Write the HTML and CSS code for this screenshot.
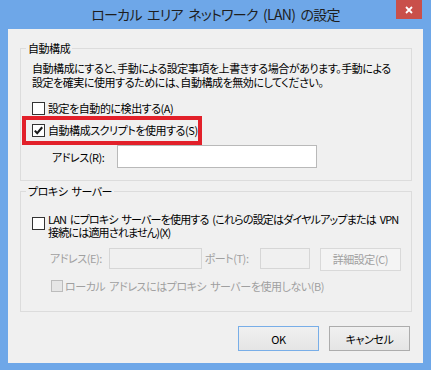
FILE: index.html
```html
<!DOCTYPE html>
<html lang="ja">
<head>
  <meta charset="UTF-8">
  <title>ローカル エリア ネットワーク (LAN) の設定</title>
  <link rel="stylesheet" href="styles.css">
</head>
<body>
  <div class="window">
    <!-- Title bar -->
    <div class="titlebar">
      <div class="title">ローカル エリア ネットワーク (LAN) の設定</div>
      <div class="close">
        <svg width="8" height="8" viewBox="0 0 8 8"><path d="M1 1 L7 7 M7 1 L1 7" stroke="#fff" stroke-width="1.8" fill="none"/></svg>
      </div>
    </div>

    <div class="client">
      <!-- Automatic configuration -->
      <fieldset class="group auto-group">
        <legend>自動構成</legend>
        <p class="note">自動構成にすると、手動による設定事項を上書きする場合があります。手動による<br>設定を確実に使用するためには、自動構成を無効にしてください。</p>

        <div class="check-row first">
          <span class="box"></span>
          <span>設定を自動的に検出する(A)</span>
        </div>

        <div class="check-row highlighted">
          <span class="box">
            <svg width="11" height="11" viewBox="0 0 11 11"><path d="M1.8 5.6 L4.2 8.2 L9.2 2.3" stroke="#1a1a1a" stroke-width="2.1" fill="none"/></svg>
          </span>
          <span>自動構成スクリプトを使用する(S)</span>
        </div>

        <div class="field-row">
          <label class="field-label">アドレス(R):</label>
          <span class="input script-input"></span>
        </div>
      </fieldset>

      <!-- Proxy server -->
      <fieldset class="group proxy-group">
        <legend>プロキシ サーバー</legend>
        <div class="proxy-check">
          <span class="box"></span>
          <span>LAN にプロキシ サーバーを使用する (これらの設定はダイヤルアップまたは VPN<br>接続には適用されません)(X)</span>
        </div>

        <div class="proxy-row">
          <span class="dim addr-label">アドレス(E):</span>
          <span class="input disabled addr-input"></span>
          <span class="dim port-label">ポート(T):</span>
          <span class="input disabled port-input"></span>
          <span class="btn disabled-btn">詳細設定(C)</span>
        </div>

        <div class="check-row bypass">
          <span class="box off"></span>
          <span class="dim">ローカル アドレスにはプロキシ サーバーを使用しない(B)</span>
        </div>
      </fieldset>

      <div class="actions">
        <span class="btn default">OK</span>
        <span class="btn">キャンセル</span>
      </div>
    </div>
  </div>
</body>
</html>
```

FILE: styles.css
```css
body {
  margin: 0;
  background-color: #6ea7e8;
  font-family: "Noto Sans CJK JP", "Noto Sans", sans-serif;
  font-size: 11px;
  font-feature-settings: "palt";
  letter-spacing: -0.45px;
  word-spacing: 2px;
  color: #000;
}

.window {
  width: 431px;
  height: 370px;
  display: flex;
  flex-direction: column;
}

/* Title bar */
.titlebar {
  height: 29px;
  display: grid;
  grid-template-columns: 1fr auto 1fr;
}

.title {
  grid-column: 2;
  font-size: 14px;
  letter-spacing: -0.75px;
  word-spacing: 3px;
  line-height: 29px;
  color: #1e1e1e;
  white-space: nowrap;
}

.close {
  grid-column: 3;
  justify-self: end;
  align-self: start;
  width: 26px;
  height: 19px;
  margin-right: 9px;
  background-color: #c9504a;
  display: flex;
  align-items: center;
  justify-content: center;
}

/* Client area */
.client {
  margin: 0 8px;
  height: 334px;
  box-sizing: border-box;
  padding: 0 11px 0 12px;
  background-color: #f0f0f0;
  display: flex;
  flex-direction: column;
}

.group {
  border: 1px solid #dcdcdc;
  margin: 0;
  min-width: 0;
}

.group legend {
  padding: 0 2px;
  margin-left: -6px;
  line-height: 16px;
}

.auto-group {
  margin-top: 11px;
  padding: 5px 10px 12px 11px;
}

.proxy-group {
  margin-top: 2px;
  padding: 14px 10px 17px 11px;
}

.note {
  margin: 0;
  line-height: 14px;
  white-space: nowrap;
}

/* Checkboxes */
.box {
  width: 13px;
  height: 13px;
  box-sizing: border-box;
  border: 1px solid #333;
  background-color: #fff;
  flex: none;
  display: flex;
  align-items: center;
  justify-content: center;
}

.box.off {
  width: 12px;
  height: 12px;
  border-color: #bcbcbc;
  background-color: #e6e6e6;
}

.check-row {
  display: flex;
  align-items: center;
  gap: 3px;
  line-height: 16px;
  white-space: nowrap;
}

.check-row.first {
  margin-top: 11px;
}

.check-row.highlighted {
  position: relative;
  margin-top: 6px;
}

/* red annotation frame drawn over the row */
.check-row.highlighted::after {
  content: "";
  position: absolute;
  left: -10px;
  top: -6px;
  width: 180px;
  height: 29px;
  box-sizing: border-box;
  border: 4px solid #e2202a;
}

.field-row {
  display: flex;
  align-items: center;
  margin-top: 7px;
  padding-left: 20px;
}

.field-label {
  width: 65px;
}

/* Text boxes */
.input {
  display: block;
  box-sizing: border-box;
  border: 1px solid #b9b9b9;
  background-color: #fff;
}

.input.disabled {
  border-color: #d6d6d6;
  background-color: #f0f0f0;
}

.script-input {
  width: 200px;
  height: 23px;
}

.proxy-check {
  display: flex;
  align-items: flex-start;
  gap: 3px;
  line-height: 13px;
  letter-spacing: -0.8px;
  white-space: nowrap;
}

.proxy-check .box {
  margin-top: 4px;
}

.proxy-row {
  display: flex;
  align-items: flex-start;
  margin-top: 9px;
  padding-left: 18px;
  line-height: 21px;
}

.dim {
  color: #a0a0a0;
}

.addr-label {
  width: 60px;
}

.addr-input {
  width: 93px;
  height: 21px;
}

.port-label {
  margin-left: 3px;
  width: 56px;
}

.port-input {
  width: 50px;
  height: 21px;
}

.check-row.bypass {
  margin-top: 7px;
  padding-left: 19px;
  gap: 2px;
}

/* Buttons */
.btn {
  box-sizing: border-box;
  width: 81px;
  height: 25px;
  border: 1px solid #acacac;
  background: linear-gradient(#f0f0f0, #e5e5e5);
  display: flex;
  align-items: center;
  justify-content: center;
  font-size: 11px;
}

.btn.default {
  border-color: #78aee8;
}

.disabled-btn {
  margin-left: 10px;
  width: 82px;
  height: 23px;
  border-color: #d9d9d9;
  background: #f4f4f4;
  color: #a0a0a0;
}

.actions {
  display: flex;
  justify-content: flex-end;
  gap: 10px;
  margin-top: 14px;
  padding-right: 2px;
}
```
